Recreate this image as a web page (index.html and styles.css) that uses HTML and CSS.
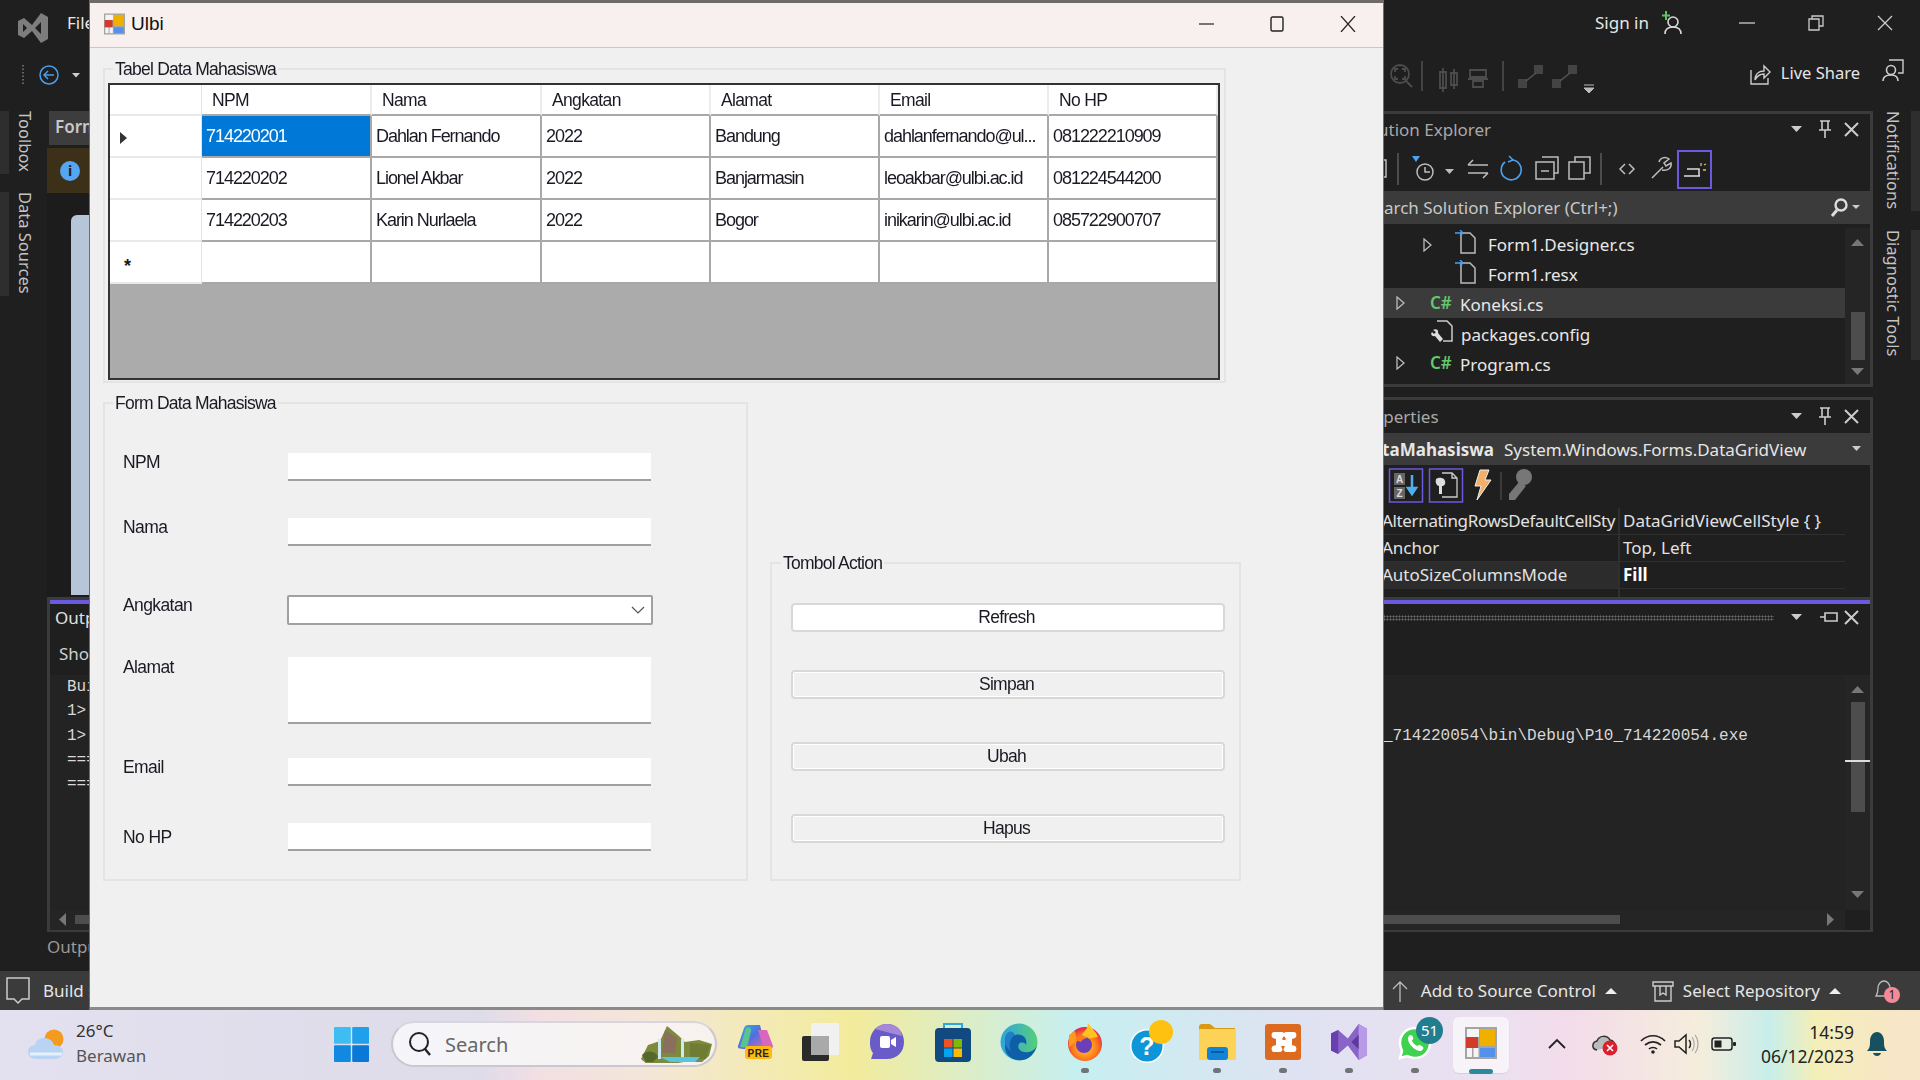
FILE: index.html
```html
<!DOCTYPE html>
<html lang="id">
<head>
<meta charset="utf-8">
<title>Ulbi</title>
<link rel="stylesheet" href="styles.css">
</head>
<body>
<div class="desktop">
  <div class="ide">
    <div class="ide-top">
      <div class="menu-row">
        <svg class="vs-logo" width="30" height="30" viewBox="0 0 30 30"><path fill="#7d7d7d" fill-rule="evenodd" d="M0 8 6 5l8 7L23 0l7 4v22l-7 4-9-12-8 7-6-3ZM23 9l-6 6 6 6ZM5 11l4 4-4 4Z"/></svg>
        <span class="menu-item">File</span>
        <span class="spacer"></span>
        <span class="sign-in">Sign in</span>
        <svg class="avatar" width="22" height="24" viewBox="0 0 22 24"><path d="M6 0v9M2 4.500h8" stroke="#5fc15f" stroke-width="2"/><circle cx="13" cy="11" r="5" fill="none" stroke="#d8d8d8" stroke-width="1.600"/><path d="M5 23c0-5 3-7 8-7s8 2 8 7" fill="none" stroke="#d8d8d8" stroke-width="1.600"/></svg>
        <svg class="cap cap-min" width="16" height="16" viewBox="0 0 16 16"><path d="M0 8h16" stroke="#ccc" stroke-width="1.300"/></svg>
        <svg class="cap cap-res" width="16" height="16" viewBox="0 0 16 16"><path d="M1 4h10v11H1Z M4 4V1h11v10h-4" fill="none" stroke="#ccc" stroke-width="1.300"/></svg>
        <svg class="cap cap-close" width="16" height="16" viewBox="0 0 16 16"><path d="M1 1l14 14M15 1 1 15" stroke="#ccc" stroke-width="1.300"/></svg>
      </div>
      <div class="tool-row">
        <svg class="back" width="62" height="24" viewBox="0 0 62 24"><path d="M4 2v20" stroke="#666" stroke-width="2" stroke-dasharray="1.500 2"/><circle cx="30" cy="12" r="9" fill="none" stroke="#4a9fea" stroke-width="1.500"/><path d="M35 12h-10M29 8l-4 4 4 4" fill="none" stroke="#4a9fea" stroke-width="1.500"/><path d="M53 10h8l-4 4.500Z" fill="#ccc"/></svg>
        <span class="spacer"></span>
        <svg class="tool-icons" width="222" height="44" viewBox="0 0 222 44">
          <g fill="none" stroke="#4c4c4c" stroke-width="1.800"><circle cx="10" cy="17" r="9"/><path d="M16 24l6 6M5 15v-3h3M15 15v-3h-3M5 19v3h3M15 19v3h-3"/><path d="M32 4v30" stroke="#484848"/><path d="M50 15h6v16h-6ZM61 16h6v12h-6ZM53 11v24M64 12v20"/><path d="M80 13h16v7H80ZM83 24h10v6H83ZM78 22h20"/><path d="M113 4v30" stroke="#484848"/></g>
          <g fill="#444"><rect x="128" y="22" width="9" height="9"/><rect x="144" y="8" width="9" height="9"/><rect x="162" y="22" width="9" height="9"/><rect x="178" y="8" width="9" height="9"/></g>
          <path d="M136 24 146 16M170 24l10-8" stroke="#555" stroke-width="1.500"/>
          <path d="M194 28h10M194 31h10l-5 5Z" fill="#bbb" stroke="#bbb"/>
        </svg>
        <svg class="share" width="22" height="22" viewBox="0 0 22 22"><path d="M2 7v14h17v-6M6 17c0-6 4-9 9-9V3l6 6-6 6v-4c-4 0-7 2-9 6Z" fill="none" stroke="#ccc" stroke-width="1.400"/></svg>
        <span class="live-share">Live Share</span>
        <svg class="feedback" width="22" height="24" viewBox="0 0 22 24"><path d="M7 1h14v13h-5" fill="none" stroke="#ccc" stroke-width="1.400"/><circle cx="9" cy="11" r="4.500" fill="#1f1f1f" stroke="#ccc" stroke-width="1.600"/><path d="M1 22c0-4 3-6 8-6s7 2 7 6" fill="none" stroke="#ccc" stroke-width="1.600"/></svg>
      </div>
    </div>
    <div class="ide-main">
      <div class="rail rail-left">
        <span class="rail-tab rail-tab-toolbox">Toolbox</span>
        <span class="rail-tab">Data Sources</span>
      </div>
      <div class="work">
        <div class="work-upper">
          <div class="designer">
            <div class="doc-tab">Form1</div>
            <div class="infobar"><span class="info-dot">i</span></div>
            <div class="canvas"><div class="design-form"></div></div>
          </div>
          <div class="side">
            <div class="panel panel-se">
              <div class="panel-title title-se"><span class="title-text">Solution Explorer</span>
                <svg class="panel-ctl" width="72" height="20" viewBox="0 0 72 20"><use href="#ctl-set"/></svg></div>
              <svg class="se-tools" width="336" height="46" viewBox="0 0 336 46">
                <g fill="none" stroke="#bdbdbd" stroke-width="1.500">
                  <rect x="-4" y="15" width="7" height="17"/>
                  <path d="M15 8v32" stroke="#4c4c4c" stroke-width="2"/>
                  <circle cx="42" cy="27" r="8"/><path d="M42 22v5h5"/>
                  <path d="M85 20h20M90 15l-5 5M85 28h20M100 33l5-5"/>
                  <path d="M159 12h16v16h-4M153 17h18v17h-18Z M158 26h8"/>
                  <rect x="192" y="12" width="15" height="16"/><rect x="186" y="17" width="15" height="17" fill="#1f1f1f"/>
                  <path d="M218 8v32" stroke="#4c4c4c" stroke-width="2"/>
                  <path d="M242 19l-5 5 5 5M246 19l5 5-5 5"/>
                  <path d="M269 33l11-11M276 17c1-4 6-6 10-3l-5 4 2 3 5-3c1 5-3 8-9 7"/>
                </g>
                <path d="M29 11h8l-4 6Z" fill="#4aa3f0"/>
                <path d="M62 24h9l-4.500 5Z" fill="#bdbdbd"/>
                <path d="M122 17a10 10 0 1 0 8-2" fill="none" stroke="#4aa3f0" stroke-width="1.600"/><path d="M126 11l4 4-5 2" fill="none" stroke="#4aa3f0" stroke-width="1.500"/>
                <rect x="295" y="6" width="33" height="37" fill="none" stroke="#6a5ae0" stroke-width="2"/>
                <path d="M301 31h16M304 24h12v7" fill="none" stroke="#ddd" stroke-width="1.500"/><path d="M318 18v3M320 25h3M321 20l2-1" stroke="#e0c060" stroke-width="1.300"/>
              </svg>
              <div class="search-box"><span class="search-text">Search Solution Explorer (Ctrl+;)</span>
                <svg class="search-ico" width="36" height="24" viewBox="0 0 36 24"><circle cx="12" cy="9" r="5.500" fill="none" stroke="#ddd" stroke-width="2.400"/><path d="M8 14l-5 6" stroke="#ddd" stroke-width="3"/><path d="M23 9h8l-4 4Z" fill="#ccc"/></svg>
              </div>
              <div class="tree">
                <div class="tree-rows">
                  <div class="tree-row lvl-3"><svg class="file-i" width="22" height="24" viewBox="0 0 22 24"><use href="#link-file"/></svg><svg class="expander exp-abs" width="10" height="14" viewBox="0 0 10 14"><path d="M1 1l7 6-7 6Z" fill="none" stroke="#bbb" stroke-width="1.300"/></svg><span>Form1.Designer.cs</span></div>
                  <div class="tree-row lvl-3"><svg class="file-i" width="22" height="24" viewBox="0 0 22 24"><use href="#link-file"/></svg><span>Form1.resx</span></div>
                  <div class="tree-row lvl-2 tree-row-sel"><svg class="expander" width="10" height="14" viewBox="0 0 10 14"><path d="M1 1l7 6-7 6Z" fill="none" stroke="#bbb" stroke-width="1.300"/></svg><span class="cs">C#</span><span>Koneksi.cs</span></div>
                  <div class="tree-row lvl-2"><span class="no-exp"></span><svg class="cfg-i" width="24" height="24" viewBox="0 0 24 24"><path d="M7 1h10l5 5v15H13" fill="none" stroke="#ccc" stroke-width="1.500"/><path d="M3 10c3-2 6 0 5 3l5 6-3 3-5-6c-3 1-5-2-3-4l2 2 2-2Z" fill="#ddd"/></svg><span>packages.config</span></div>
                  <div class="tree-row lvl-2"><svg class="expander" width="10" height="14" viewBox="0 0 10 14"><path d="M1 1l7 6-7 6Z" fill="none" stroke="#bbb" stroke-width="1.300"/></svg><span class="cs">C#</span><span>Program.cs</span></div>
                </div>
                <svg class="vscroll" width="25" height="156" viewBox="0 0 25 156"><rect width="25" height="156" fill="#252525"/><path d="M6 18h13l-6.500-7Z" fill="#777"/><rect x="6" y="84" width="14" height="48" fill="#4d4d4d"/><path d="M6 140h13l-6.500 7Z" fill="#777"/></svg>
              </div>
            </div>
            <div class="panel panel-props">
              <div class="panel-title title-props"><span class="title-text">Properties</span>
                <svg class="panel-ctl" width="72" height="20" viewBox="0 0 72 20"><use href="#ctl-set"/></svg></div>
              <div class="obj-select"><b>dgvDataMahasiswa</b><span class="obj-type">System.Windows.Forms.DataGridView</span>
                <svg class="obj-caret" width="10" height="8" viewBox="0 0 10 8"><path d="M0 1h9L4.500 6Z" fill="#ccc"/></svg></div>
              <svg class="prop-tools" width="160" height="40" viewBox="0 0 160 40">
                <path d="M1 6v22" stroke="#888" stroke-width="2" stroke-dasharray="2 2"/>
                <rect x="7.500" y="3" width="33" height="33" fill="none" stroke="#6a5ae0" stroke-width="1.500"/>
                <rect x="47.500" y="3" width="33" height="33" fill="none" stroke="#6a5ae0" stroke-width="1.500"/>
                <rect x="12" y="7" width="11" height="12" fill="#666"/><rect x="12" y="21" width="11" height="12" fill="#666"/>
                <text x="17.500" y="17" class="az">A</text><text x="17.500" y="31" class="az">Z</text>
                <path d="M30 9v15M26 22l4 6 4-6Z" stroke="#4fb0ee" stroke-width="2.500" fill="#4fb0ee"/>
                <path d="M60 7h10l5 5v19H60M70 7v5h5" fill="none" stroke="#ccc" stroke-width="1.300"/><path d="M54 13c3-2 8-2 9 2 1 3-1 5-3 5v8h-3v-8c-2 0-4-3-3-7Z" fill="#ddd"/>
                <path d="M98 4h9l-4 10h6L95 34l4-14h-6Z" fill="#f3b06a" stroke="#eee" stroke-width="1"/>
                <path d="M119 6v28" stroke="#444" stroke-width="1.500"/>
                <circle cx="142" cy="11" r="8" fill="#777"/><path d="M137 16 127 28v6h6l11-14Z" fill="#777"/>
              </svg>
              <div class="prop-grid">
                <div class="prop-row"><span class="prop-name prop-name-fit">AlternatingRowsDefaultCellSty</span><span class="prop-val">DataGridViewCellStyle { }</span></div>
                <div class="prop-row"><span class="prop-name">Anchor</span><span class="prop-val">Top, Left</span></div>
                <div class="prop-row prop-row-sel"><span class="prop-name">AutoSizeColumnsMode</span><span class="prop-val prop-bold">Fill</span></div>
                <div class="prop-row prop-row-cut"><span class="prop-name"></span><span class="prop-val"></span></div>
              </div>
            </div>
          </div>
        </div>
        <div class="output">
          <div class="out-title"><span class="out-name">Output</span><span class="grip"></span>
            <svg class="panel-ctl" width="72" height="20" viewBox="0 0 72 20"><path d="M2 6h11L7.500 12Z" fill="#ccc"/><path d="M31 9h5M36 5h12v8H36ZM36 5v8" fill="none" stroke="#ccc" stroke-width="1.600"/><path d="M56 3l13 13M69 3 56 16" stroke="#ccc" stroke-width="2"/></svg></div>
          <div class="out-tools">Show</div>
          <div class="out-body">
            <div class="out-text">
              <div>Build</div>
              <div>1></div>
              <div><span class="out-prefix">1></span>_714220054\bin\Debug\P10_714220054.exe</div>
              <div>===</div>
              <div>===</div>
            </div>
            <svg class="vscroll out-vs" width="25" height="235" viewBox="0 0 25 235"><path d="M6 18h13l-6.500-7Z" fill="#777"/><rect x="6" y="27" width="14" height="110" fill="#4d4d4d"/><rect y="85" width="25" height="2" fill="#ddd"/><path d="M6 216h13l-6.500 7Z" fill="#777"/></svg>
          </div>
          <svg class="hscroll" width="1795" height="20" viewBox="0 0 1795 20"><rect width="1795" height="20" fill="#252525"/><path d="M16 3v13l-7-6.500Z" fill="#777"/><rect x="25" y="5" width="1545" height="9" fill="#4d4d4d"/><path d="M1777 3v13l7-6.500Z" fill="#777"/></svg>
        </div>
        <div class="out-tabs">Output</div>
      </div>
      <div class="rail rail-right">
        <span class="rail-tab rail-tab-notif">Notifications</span>
        <span class="rail-tab rail-tab-diag">Diagnostic Tools</span>
      </div>
    </div>
    <div class="status">
      <svg class="status-chat" width="26" height="30" viewBox="0 0 26 30"><path d="M2 2h22v21h-7l-4 4-4-4H2Z" fill="none" stroke="#ccc" stroke-width="1.500"/></svg>
      <span class="status-text">Build succeeded</span>
      <span class="spacer"></span>
      <svg class="status-up" width="18" height="22" viewBox="0 0 18 22"><path d="M9 22V2M2 9l7-7 7 7" fill="none" stroke="#bbb" stroke-width="1.300"/></svg>
      <span class="status-text status-add">Add to Source Control</span>
      <svg class="status-caret" width="12" height="8" viewBox="0 0 12 8"><path d="M0 7h12L6 1Z" fill="#eee"/></svg>
      <svg class="status-repo" width="22" height="22" viewBox="0 0 22 22"><path d="M1 2h20v4H1ZM3 6v15h16V6M8 6v9l3-2 3 2V6" fill="none" stroke="#ccc" stroke-width="1.400"/></svg>
      <span class="status-text status-sel">Select Repository</span>
      <svg class="status-caret" width="12" height="8" viewBox="0 0 12 8"><path d="M0 7h12L6 1Z" fill="#eee"/></svg>
      <span class="status-bell">
        <svg width="22" height="22" viewBox="0 0 22 22"><path d="M3 17c2-3 2-5 2-8 0-4 3-7 6-7s6 3 6 7c0 3 0 5 2 8Z" fill="none" stroke="#bbb" stroke-width="1.300"/></svg>
        <span class="bell-count">1</span>
      </span>
    </div>
  </div>

  <div class="form-window">
    <div class="form-title">
      <svg class="form-icon" width="21" height="22" viewBox="0 0 32 32"><use href="#app-grid"/></svg>
      <span class="form-name">Ulbi</span>
      <span class="spacer"></span>
      <svg class="fcap fcap-min" width="16" height="16" viewBox="0 0 16 16"><path d="M0 8h15" stroke="#222" stroke-width="1.200"/></svg>
      <svg class="fcap fcap-max" width="16" height="16" viewBox="0 0 16 16"><rect x="2" y="1" width="12" height="14" rx="1.500" fill="none" stroke="#222" stroke-width="1.400"/></svg>
      <svg class="fcap fcap-close" width="16" height="16" viewBox="0 0 16 16"><path d="M1 0l14 16M15 0 1 16" stroke="#222" stroke-width="1.200"/></svg>
    </div>
    <div class="form-body">
      <div class="group group-table">
        <div class="group-label">Tabel Data Mahasiswa</div>
        <div class="dgv">
          <div class="dgv-row dgv-head">
            <div class="rh"></div><div class="hc">NPM</div><div class="hc">Nama</div><div class="hc">Angkatan</div><div class="hc">Alamat</div><div class="hc">Email</div><div class="hc">No HP</div>
          </div>
          <div class="dgv-row">
            <div class="rh"><span class="row-arrow"></span></div><div class="dc dc-sel">714220201</div><div class="dc">Dahlan Fernando</div><div class="dc">2022</div><div class="dc">Bandung</div><div class="dc">dahlanfernando@ul...</div><div class="dc">081222210909</div>
          </div>
          <div class="dgv-row">
            <div class="rh"></div><div class="dc">714220202</div><div class="dc">Lionel Akbar</div><div class="dc">2022</div><div class="dc">Banjarmasin</div><div class="dc">leoakbar@ulbi.ac.id</div><div class="dc">081224544200</div>
          </div>
          <div class="dgv-row">
            <div class="rh"></div><div class="dc">714220203</div><div class="dc">Karin Nurlaela</div><div class="dc">2022</div><div class="dc">Bogor</div><div class="dc">inikarin@ulbi.ac.id</div><div class="dc">085722900707</div>
          </div>
          <div class="dgv-row">
            <div class="rh rh-new">*</div><div class="dc"></div><div class="dc"></div><div class="dc"></div><div class="dc"></div><div class="dc"></div><div class="dc"></div>
          </div>
        </div>
      </div>
      <div class="form-lower">
        <div class="group group-form">
          <div class="group-label">Form Data Mahasiswa</div>
          <div class="fields">
            <span class="f-label">NPM</span><span class="f-input"></span>
            <span class="f-label">Nama</span><span class="f-input"></span>
            <span class="f-label f-label-mid">Angkatan</span>
            <span class="f-combo"><svg width="14" height="9" viewBox="0 0 14 9"><path d="M1 1l6 6 6-6" fill="none" stroke="#555" stroke-width="1.200"/></svg></span>
            <span class="f-label f-label-mid">Alamat</span><span class="f-input f-area"></span>
            <span class="f-label">Email</span><span class="f-input"></span>
            <span class="f-label f-label-low">No HP</span><span class="f-input"></span>
          </div>
        </div>
        <div class="group group-action">
          <div class="group-label group-label-action">Tombol Action</div>
          <div class="actions">
            <span class="btn btn-first">Refresh</span>
            <span class="btn">Simpan</span>
            <span class="btn">Ubah</span>
            <span class="btn">Hapus</span>
          </div>
        </div>
      </div>
    </div>
  </div>
</div>

<div class="taskbar">
  <svg class="weather" width="38" height="32" viewBox="0 0 38 32"><circle cx="26" cy="11" r="9.500" fill="#f39a1f"/><path d="M8 31c-5 0-8-3-8-7s3-7 7-7c1-5 5-7 9-7 5 0 9 3 10 7 5 0 9 3 9 7s-3 7-8 7Z" fill="#b9d4f3"/><path d="M2 26h32" stroke="#e6f0fb" stroke-width="3"/></svg>
  <div class="weather-text"><span>26°C</span><span class="weather-sub">Berawan</span></div>
  <svg class="win" width="35" height="35" viewBox="0 0 35 35"><rect width="16.800" height="16.800" rx="1" fill="#3dbdf2"/><rect x="18.200" width="16.800" height="16.800" rx="1" fill="#1fa0ea"/><rect y="18.200" width="16.800" height="16.800" rx="1" fill="#0f8ae0"/><rect x="18.200" y="18.200" width="16.800" height="16.800" rx="1" fill="#0a78d6"/></svg>
  <div class="searchbar">
    <svg width="24" height="26" viewBox="0 0 24 26"><circle cx="11" cy="11" r="9" fill="none" stroke="#222" stroke-width="2"/><path d="M17 18l5 6" stroke="#222" stroke-width="2.400"/></svg>
    <span class="search-label">Search</span>
    <span class="spacer"></span>
    <svg width="74" height="38" viewBox="0 0 74 38"><path d="M1 34 8 20 20 16 27 1l12 10 6 6 14-2 13 4-3 12-7 6H44l-18 3H8Z" fill="#7d8a3c"/><path d="M25 5l12 8-2 15H22Z" fill="#8a6f5c"/><path d="M50 18l20 2-4 14H50Z" fill="#6f7d32"/><path d="M18 14h3v20h-3ZM41 14h3v22h-3Z" fill="#cfe9f2"/><path d="M20 32h40l-5 5H30Z" fill="#58c4e0"/><path d="M2 30c5-6 14-4 16 2l-5 5H6Z" fill="#55682c"/></svg>
  </div>
  <div class="tslot"><svg width="38" height="36" viewBox="0 0 38 36"><defs><linearGradient id="cp" x1="0" y1="0" x2="1" y2="1"><stop offset="0" stop-color="#2fb7e8"/><stop offset=".5" stop-color="#4f6fe0"/><stop offset="1" stop-color="#e06ab0"/></linearGradient></defs><path d="M2 22 8 4c1-2 2-3 4-3h12l6 24H8c-4 0-7-1-6-3Z" fill="url(#cp)"/><path d="M10 4l-6 19c5 1 7 0 8-3l3-13c1-3-3-5-5-3Z" fill="#5bc38e"/><path d="M22 6l9 0 6 16c0 3-3 3-5 3h-4Z" fill="#d768bd"/><rect x="9" y="22" width="27" height="13" rx="3" fill="#fdbb12"/><text x="22.500" y="32.500" class="pre">PRE</text></svg></div>
  <div class="tslot"><svg width="38" height="38" viewBox="0 0 38 38"><rect x="0" y="13" width="27" height="25" rx="2" fill="#2a2a2a"/><rect x="9" y="0" width="28" height="32" rx="1" fill="#f1f1f1"/><rect x="9" y="13" width="18" height="19" fill="#a9a9a9"/></svg></div>
  <div class="tslot"><svg width="36" height="38" viewBox="0 0 36 38"><path d="M18 1c10 0 17 8 17 18s-7 17-17 17H2l2-6C1 26 1 22 1 19 1 9 8 1 18 1Z" fill="#6a5cc8"/><path d="M18 1c10 0 14 6 15 12L6 6c3-3 7-5 12-5Z" fill="#a688d8"/><rect x="11" y="13" width="10" height="12" rx="2" fill="#fff"/><path d="M22 17l5-3v10l-5-3Z" fill="#fff"/></svg></div>
  <div class="tslot"><svg width="36" height="40" viewBox="0 0 36 40"><path d="M9 7V2h18v5" fill="none" stroke="#2ca7e0" stroke-width="2"/><rect y="6" width="36" height="34" rx="4" fill="#114a80"/><rect x="9" y="17" width="8.500" height="8.500" fill="#f25022"/><rect x="18.500" y="17" width="8.500" height="8.500" fill="#7fba00"/><rect x="9" y="26.500" width="8.500" height="8.500" fill="#00a4ef"/><rect x="18.500" y="26.500" width="8.500" height="8.500" fill="#ffb900"/></svg></div>
  <div class="tslot"><svg width="38" height="38" viewBox="0 0 38 38"><defs><linearGradient id="ed" x1="0" y1="0" x2="1" y2="0"><stop offset="0" stop-color="#2fa4e0"/><stop offset="1" stop-color="#56cf7a"/></linearGradient></defs><circle cx="19" cy="19" r="18.500" fill="url(#ed)"/><path d="M37 22c-2 6-8 8-13 7-5-1-7-5-5-8 1-2 6-2 7 1 2-7-4-12-11-10C7 14 3 22 6 29c4 9 18 11 25 4 3-3 5-7 6-11Z" fill="#0f5fa8"/><path d="M15 12c-5 3-7 10-4 16-5-3-8-10-5-16 2-4 6-5 9 0Z" fill="#1f7ec4"/></svg></div>
  <div class="tslot tslot-dot"><svg width="36" height="38" viewBox="0 0 36 38"><defs><radialGradient id="ff" cx=".5" cy=".6" r=".6"><stop offset="0" stop-color="#ffd23a"/><stop offset=".6" stop-color="#ff7a18"/><stop offset="1" stop-color="#e0224f"/></radialGradient></defs><circle cx="18" cy="21" r="17" fill="url(#ff)"/><path d="M21 0c3 5 8 8 10 14l-12 2-4-5c3-3 6-6 6-11Z" fill="#ffc31f"/><path d="M2 12 8 8l2 10-8 6Z" fill="#ff9a1f"/><circle cx="17" cy="22" r="8" fill="#6b3fb8"/><path d="M8 17c3-4 9-5 14-2-5 0-7 2-8 4Z" fill="#ff7a18"/></svg></div>
  <div class="tslot"><svg width="44" height="44" viewBox="0 0 44 44"><circle cx="18" cy="26" r="17" fill="#fff"/><circle cx="18" cy="26" r="15.500" fill="#0f96d8"/><text x="18" y="35" class="qm">?</text><circle cx="32" cy="12" r="12" fill="#fec10f"/></svg></div>
  <div class="tslot tslot-dot"><svg width="37" height="36" viewBox="0 0 37 36"><path d="M0 3c0-2 1-3 3-3h8l5 4h20v6H0Z" fill="#d99a11"/><rect y="5" width="37" height="31" rx="1" fill="#fcd257"/><rect x="8" y="23" width="21" height="13" rx="3" fill="#1184d8"/><path d="M12 28h13" stroke="#0b5a9a" stroke-width="2"/></svg></div>
  <div class="tslot tslot-dot"><svg width="36" height="36" viewBox="0 0 36 36"><rect width="36" height="36" rx="3" fill="#dc6a1f"/><path d="M9 8h7c3 0 4 2 3 4l-2 3 1 1 1 0 1 0 1-1-2-3c-1-2 0-4 3-4h7c3 0 3 5 1 6l-3 1v6l3 1c2 1 2 6-1 6h-7c-3 0-4-2-3-4l1-2h-4l1 2c1 2 0 4-3 4H9c-3 0-3-5-1-6l3-1v-6l-3-1c-2-1-2-6 1-6Z" fill="#fff"/></svg></div>
  <div class="tslot tslot-dot"><svg width="36" height="36" viewBox="0 0 30 30"><path fill="#8a63c8" d="M0 8 6 5l8 7L23 0l7 4v22l-7 4-9-12-8 7-6-3Z"/><path fill="#b79be6" d="M23 0l7 4v22l-7 4Z"/><path fill="#6a3fae" d="M0 8l6-3v20l-6-3Z"/><path fill="#5b3a9e" d="M23 9l-6 6 6 6Z"/></svg></div>
  <div class="tslot tslot-dot tslot-wa">
    <svg width="34" height="36" viewBox="0 0 34 36"><path d="M17 2c9 0 15 7 15 15s-6 15-15 15c-3 0-5-1-8-2l-7 2 2-7C3 22 2 20 2 17 2 9 8 2 17 2Z" fill="#3ed24f" stroke="#fff" stroke-width="2.500"/><path d="M11 10c1-2 3-1 4 1s-1 3-1 4c1 2 3 4 5 5 1 0 2-2 3-1l3 2c1 1 0 3-2 4-5 1-13-7-13-12 0-1 0-2 1-3Z" fill="#fff"/></svg>
    <span class="wa-badge">51</span>
  </div>
  <div class="tslot tslot-active"><svg width="32" height="32" viewBox="0 0 32 32"><use href="#app-grid"/></svg></div>
  <svg class="tray tray-chev" width="20" height="12" viewBox="0 0 20 12"><path d="M2 10l8-8 8 8" fill="none" stroke="#222" stroke-width="1.800"/></svg>
  <svg class="tray tray-cloud" width="26" height="24" viewBox="0 0 26 24"><path d="M5 18c-6-1-5-8 0-9 2-6 10-6 13-1 4 0 5 4 4 6" fill="#bbb" stroke="#333" stroke-width="1.500"/><circle cx="18" cy="16" r="7.500" fill="#d9202f"/><path d="M15 13l6 6M21 13l-6 6" stroke="#fff" stroke-width="1.600"/></svg>
  <svg class="tray tray-wifi" width="26" height="20" viewBox="0 0 26 20"><path d="M1 7c7-7 17-7 24 0M5 11c5-4 11-4 16 0M9 15c2-2 6-2 8 0" fill="none" stroke="#222" stroke-width="1.700"/><circle cx="13" cy="18" r="1.800" fill="#222"/></svg>
  <svg class="tray tray-vol" width="26" height="22" viewBox="0 0 26 22"><path d="M2 8h4l7-6v18l-7-6H2Z" fill="none" stroke="#222" stroke-width="1.500"/><path d="M16 7c2 2 2 6 0 8" fill="none" stroke="#222" stroke-width="1.500"/><path d="M19 4c3 4 3 10 0 14M22 2c4 5 4 13 0 18" fill="none" stroke="#aaa" stroke-width="1.200"/></svg>
  <svg class="tray tray-bat" width="25" height="14" viewBox="0 0 25 14"><rect x="1" y="1" width="20" height="12" rx="2.500" fill="none" stroke="#222" stroke-width="1.500"/><rect x="3.500" y="3.500" width="7" height="7" fill="#222"/><rect x="22" y="5" width="3" height="4" rx="1" fill="#222"/></svg>
  <div class="clock"><span>14:59</span><span>06/12/2023</span></div>
  <svg class="tray-bell" width="22" height="26" viewBox="0 0 22 26"><path d="M1 20c3-3 3-6 3-10 0-5 3-9 7-9s7 4 7 9c0 4 0 7 3 10Z" fill="#17505f"/><path d="M7 22h8c-1 4-7 4-8 0Z" fill="#17505f"/></svg>
</div>

<svg class="defs" width="0" height="0">
  <defs>
    <g id="ctl-set"><path d="M2 6h11L7.500 12Z" fill="#ccc"/><path d="M31 1h10M33 1v9h6V1M30 10h12M36 10v8" fill="none" stroke="#ccc" stroke-width="1.600"/><path d="M56 3l13 13M69 3 56 16" stroke="#ccc" stroke-width="2"/></g>
    <g id="link-file"><path d="M6 3h9l5 5v15H6Z" fill="none" stroke="#bbb" stroke-width="1.500"/><path d="M0 3h8M5 0l3 3-3 3" fill="none" stroke="#4aa3f0" stroke-width="1.400"/></g>
    <g id="app-grid"><rect width="32" height="32" fill="#a4a4a4"/><rect x="2" y="2" width="12" height="8" fill="#f4f4f4"/><rect x="2" y="21" width="5" height="9" fill="#f4f4f4"/><rect x="8.500" y="21" width="5" height="9" fill="#f4f4f4"/><rect x="15" y="2" width="15" height="17" fill="#f0b000"/><rect x="15" y="21" width="15" height="9" fill="#5590ea"/><rect x="1" y="10" width="12" height="11" fill="#d23a2c"/></g>
  </defs>
</svg>
</body>
</html>
```
FILE: styles.css
```css
* { box-sizing: border-box; }
html, body { margin: 0; padding: 0; }
body {
  width: 1920px; height: 1080px; overflow: hidden;
  display: flex; flex-direction: column;
  font-family: "Noto Sans", "Liberation Sans", sans-serif;
  background: #1f1f1f;
}
svg { display: block; flex: none; }
.defs { position: absolute; }
.spacer { flex: 1; }
.desktop { position: relative; height: 1010px; flex: none; }

/* ---------- IDE ---------- */
.ide { height: 1010px; display: flex; flex-direction: column; background: #1f1f1f; color: #ddd; font-size: 17px; }
.ide-top { height: 111px; flex: none; }
.menu-row { height: 47px; display: flex; align-items: center; padding: 0 0 2px 18px; }
.vs-logo { margin-top: 10px; }
.menu-item { margin-left: 19px; color: #e6e6e6; }
.sign-in { color: #e6e6e6; margin-right: 11px; }
.avatar { margin-right: 57px; }
.cap-min { margin-right: 53px; }
.cap-res { margin-right: 53px; }
.cap-close { margin-right: 27px; }
.tool-row { height: 64px; display: flex; align-items: flex-start; padding-left: 19px; padding-top: 13px; }
.back { margin-top: 3px; }
.tool-icons { margin-top: -3px; margin-right: 137px; }
.share { margin-right: 10px; margin-top: 3px; }
.live-share { color: #e6e6e6; margin-top: 1px; margin-right: 22px; font-size: 16.500px; }
.feedback { margin-right: 16px; margin-top: -1px; }

.ide-main { flex: 1; display: flex; min-height: 0; }
.rail { flex: none; display: flex; flex-direction: column; }
.rail-left { width: 47px; gap: 18px; align-items: flex-start; }
.rail-right { width: 47px; gap: 19px; }
.rail-tab {
  writing-mode: vertical-rl; color: #c4c4c4; font-size: 16.500px; line-height: 20px; white-space: nowrap;
}
.rail-left .rail-tab { border-left: 9px solid #2e2e2e; padding-left: 6px; height: 104px; }
.rail-left .rail-tab-toolbox { height: 63px; }
.rail-right .rail-tab { border-right: 9px solid #2e2e2e; padding-right: 8px; width: 47px; padding-left: 10px; }
.rail-right .rail-tab-notif { height: 100px; }
.rail-right .rail-tab-diag { height: 130px; }

.work { flex: 1; min-width: 0; display: flex; flex-direction: column; }
.work-upper { height: 486px; display: flex; flex: none; }
.designer { width: 1232px; flex: none; display: flex; flex-direction: column; }
.doc-tab { height: 34px; background: #3d3d3d; color: #c8c8c8; font-weight: 600; margin-left: 2px; padding: 4px 0 0 6px; }
.infobar { height: 45px; margin-top: 3px; background: #3c3018; display: flex; align-items: center; padding-left: 13px; }
.info-dot { width: 20px; height: 20px; border-radius: 50%; background: #55a5f5; color: #1f1f1f; font-size: 14px; line-height: 20px; text-align: center; font-weight: 700; }
.canvas { flex: 1; background: #1c1c1c; padding: 22px 0 0 24px; }
.design-form { height: 380px; background: linear-gradient(90deg, #b6c6d8, #d8dde2 60%, #e8e8e8); border-radius: 6px 0 0 0; }

.side { flex: 1; min-width: 0; display: flex; flex-direction: column; }
.panel { display: flex; flex-direction: column; border: 3px solid #3b3b3b; border-left: 0; background: #1f1f1f; }
.panel-se { height: 276px; }
.panel-props { height: 200px; margin-top: 10px; border-bottom: 0; }
.panel-title { display: flex; align-items: center; flex: none; color: #a8a8a8; }
.panel-ctl { margin-left: auto; margin-right: 9px; flex: none; }
.title-se { height: 31px; padding-left: 75px; }
.title-props { height: 33px; padding-left: 77px; }
.se-tools { margin-left: 104px; height: 46px; flex: none; }
.search-box { height: 33px; flex: none; background: #3b3b3b; display: flex; align-items: center; padding-left: 86px; color: #c8c8c8; margin-bottom: 4px; }
.search-ico { margin-left: auto; margin-right: 5px; }
.tree { flex: 1; display: flex; min-height: 0; }
.tree-rows { flex: 1; min-width: 0; }
.tree-row { height: 30px; display: flex; align-items: center; color: #e8e8e8; position: relative; padding-top: 2px; }
.tree-row-sel { background: #3b3b3b; }
.lvl-2 { padding-left: 117px; }
.lvl-3 { padding-left: 176px; }
.exp-abs { position: absolute; left: 144px; top: 12px; }
.file-i { margin-right: 11px; margin-top: -4px; }
.expander { margin-right: 24px; margin-top: -2px; }
.no-exp { width: 29px; flex: none; }
.cs { color: #67c56e; font-weight: 600; width: 30px; flex: none; margin-top: -3px; font-size: 17px; }
.cfg-i { margin-right: 7px; margin-top: -4px; margin-left: 5px; }

.obj-select { height: 32px; flex: none; background: #3b3b3b; display: flex; align-items: center; padding-left: 8px; color: #e6e6e6; justify-content: flex-start; white-space: nowrap; }
.obj-select b { width: 207px; flex: none; text-align: right; }
.obj-type { margin-left: 10px; }
.obj-caret { margin-left: auto; margin-right: 8px; }
.prop-tools { margin: 1px 0 1px 103px; height: 40px; flex: none; }
.az { font: 700 10px "Liberation Sans", sans-serif; fill: #ddd; text-anchor: middle; }
.prop-grid { flex: 1; min-height: 0; overflow: hidden; padding: 1px 25px 0 0; }
.prop-row { height: 27px; display: flex; border-bottom: 1px solid #2f2f2f; white-space: nowrap; }
.prop-name { width: 341px; flex: none; padding-left: 103px; overflow: hidden; border-right: 2px solid #2f2f2f; line-height: 26px; color: #e2e2e2; }
.prop-name-fit { letter-spacing: -.35px; }
.prop-val { padding-left: 3px; line-height: 26px; color: #e2e2e2; }
.prop-bold { font-weight: 700; color: #fff; }
.prop-row-sel .prop-name { background: #2c2c2c; }
.prop-row-cut { height: 9px; }

.output { height: 335px; flex: none; display: flex; flex-direction: column; border-top: 3px solid #3b3b3b; border-left: 3px solid #3b3b3b; border-right: 3px solid #3b3b3b; border-bottom: 2px solid #3b3b3b; }
.out-title { height: 37px; flex: none; border-top: 4px solid #6a5ae0; display: flex; align-items: center; padding: 0 0 6px 5px; color: #e0e0e0; }
.grip { flex: 1; height: 6px; margin: 0 15px 0 20px; background-image: radial-gradient(#6a6a6a 45%, transparent 50%); background-size: 3px 3px; }
.out-tools { height: 38px; flex: none; padding-left: 9px; line-height: 34px; color: #d0d0d0; }
.out-body { flex: 1; min-height: 0; display: flex; background: #232323; }
.out-text { flex: 1; min-width: 0; padding: 0 0 0 17px; font-family: "Liberation Mono", monospace; font-size: 16px; line-height: 24.300px; white-space: nowrap; overflow: hidden; color: #d8d8d8; }
.out-prefix { display: inline-block; width: 1316px; overflow: hidden; vertical-align: bottom; }
.out-vs { background: #252525; }
.hscroll { flex: none; width: 1795px; }
.out-tabs { flex: 1; color: #9a9a9a; line-height: 30px; background: #1f1f1f; }

.status { height: 39px; flex: none; background: #3b3b3b; display: flex; align-items: center; padding-left: 5px; color: #e6e6e6; }
.status-chat { margin-right: 12px; }
.status-up { margin-right: 12px; }
.status-caret { margin-left: 9px; }
.status-repo { margin-left: 35px; margin-right: 9px; }
.status-bell { position: relative; margin: 0 23px 0 32px; width: 24px; height: 24px; }
.bell-count { position: absolute; left: 11px; top: 8px; width: 16px; height: 16px; border-radius: 50%; background: #f58a94; color: #222; font-size: 12px; line-height: 16px; text-align: center; }

/* ---------- Form window ---------- */
.form-window {
  position: absolute; left: 90px; top: 0; width: 1293px; height: 1010px;
  background: #f0f0f0; border-top: 3px solid #6e6a68; border-bottom: 3px solid #8a8a8a;
  display: flex; flex-direction: column;
  font-family: "Liberation Sans", sans-serif; color: #1a1a24;
  box-shadow: 1px 0 0 #6e6e6e, -1px 0 0 #6e6e6e;
}
.form-title { height: 45px; flex: none; background: #f8f0ee; border-bottom: 1px solid #c8c8c8; display: flex; align-items: center; padding: 0 0 2px 14px; font-size: 19px; }
.form-icon { margin-right: 6px; }
.form-name { color: #111; }
.fcap-min { margin-right: 54px; }
.fcap-max { margin-right: 55px; }
.fcap-close { margin-right: 27px; }
.form-body { flex: 1; min-height: 0; padding: 20px 0 0 13px; filter: blur(.35px); }
.group { border: 2px solid #e4e4e4; position: relative; }
.group-label { width: fit-content; height: 19px; margin: -11px 0 0 8px; padding: 0 2px; background: #f0f0f0; font-size: 17.500px; line-height: 20px; letter-spacing: -.75px; }
.group-label-action { margin-left: 9px; }
.group-table { width: 1123px; height: 315px; }
.dgv { margin: 5px 0 0 3px; width: 1112px; height: 297px; border: 2px solid #333; background: #ababab; }
.dgv-row { display: grid; grid-template-columns: 92px 170px 170px 169px 169px 169px 169px; height: 42px; }
.dgv-head { height: 31px; }
.rh { background: #fff; border-right: 1px solid #e4e4e4; border-bottom: 2px solid #e9e9e9; position: relative; }
.row-arrow { position: absolute; left: 10px; top: 16px; border-left: 7px solid #333; border-top: 6.500px solid transparent; border-bottom: 6.500px solid transparent; }
.rh-new { font-size: 18px; font-weight: 700; padding: 14px 0 0 14px; line-height: 20px; }
.hc { background: #fff; border-right: 2px solid #ececec; border-bottom: 2px solid #a8a8a8; padding-left: 10px; font-size: 17.500px; line-height: 31px; letter-spacing: -.65px; overflow: hidden; }
.dc { background: #fff; border-right: 2px solid #a8a8a8; border-bottom: 2px solid #a8a8a8; padding-left: 4px; font-size: 18px; line-height: 41px; letter-spacing: -1.050px; white-space: nowrap; overflow: hidden; }
.dc-sel { background: #0078d7; color: #fff; }
.form-lower { display: flex; align-items: flex-end; margin-top: 19px; }
.group-form { width: 645px; height: 479px; }
.group-action { width: 471px; height: 319px; margin-left: 22px; }
.fields { display: grid; grid-template-columns: 165px 363px; grid-template-rows: 65px 77px 62px 101px 65px 57px; padding: 41px 0 0 18px; }
.f-label { font-size: 17.500px; line-height: 20px; margin-top: -1px; letter-spacing: -.6px; }
.f-label-mid { margin-top: 0; }
.f-label-low { margin-top: 4px; }
.f-input { background: #fff; height: 28px; border-bottom: 2px solid #a0a0a0; }
.f-area { height: 67px; }
.f-combo { background: #fff; height: 30px; margin: 0 -2px 0 -1px; border: 2px solid #a0a0a0; display: flex; align-items: center; justify-content: flex-end; padding-right: 6px; border-radius: 2px; }
.actions { display: grid; grid-template-rows: 67px 72px 72px 30px; padding: 31px 0 0 19px; width: 453px; }
.btn { height: 29px; border: 2px solid #d8d8d8; border-radius: 4px; background: #f0f0f0; box-shadow: inset 0 0 0 1px #fff; text-align: center; font-size: 17.500px; line-height: 25px; letter-spacing: -.7px; padding-right: 3px; }
.btn-first { background: #fff; line-height: 24px; }

/* ---------- Taskbar ---------- */
.taskbar {
  height: 70px; flex: none; display: flex; align-items: center; color: #333; position: relative;
  background: linear-gradient(90deg, #e3e0ef 0, #dfdcea 480px, #f2dfe3 540px, #f3e6d9 640px, #f3ebb0 780px, #f2eb9c 854px, #c6eff0 1077px, #dfe2f2 1300px, #ece0f0 1500px, #f3dcea 1570px, #f5eddc 1700px, #c8eeea 1770px, #f3efb8 1815px, #f8e6c8 1900px);
}
.weather { margin-left: 28px; margin-top: -2px; }
.weather-text { display: flex; flex-direction: column; margin-left: 10px; width: 258px; font-size: 17px; line-height: 25px; margin-top: -4px; }
.weather-sub { color: #555; }
.win { margin-top: -1px; }
.searchbar { width: 326px; height: 46px; margin: -2px 5px 0 22px; border-radius: 23px; background: linear-gradient(90deg, #f5f5fa, #f8f2ee); border: 2px solid #c9c7d0; border-top-color: #d8d6dc; display: flex; align-items: center; padding: 0 1px 0 15px; }
.search-label { margin-left: 13px; font-size: 20px; color: #666; }
.tslot { width: 66px; height: 70px; flex: none; display: flex; align-items: center; justify-content: center; position: relative; padding-bottom: 6px; }
.tslot-dot::after { content: ""; position: absolute; left: 29px; top: 58px; width: 8px; height: 5px; border-radius: 3px; background: #707478; }
.tslot-wa { padding-bottom: 2px; }
.pre { font: 700 10px "Liberation Sans", sans-serif; fill: #222; text-anchor: middle; letter-spacing: .5px; }
.qm { font: 700 25px "Liberation Sans", sans-serif; fill: #fff; text-anchor: middle; }
.wa-badge { position: absolute; left: 34px; top: 7px; width: 27px; height: 27px; border-radius: 50%; background: #227e8f; color: #fff; font-size: 15px; line-height: 27px; text-align: center; }
.tslot-active { width: 56px; height: 56px; margin-left: 5px; padding: 0 0 4px; border-radius: 6px; background: rgba(255,255,255,.6); box-shadow: 0 1px 1px rgba(0,0,0,.08); }
.tslot-active::after { content: ""; position: absolute; left: 16px; top: 52px; width: 24px; height: 5px; border-radius: 3px; background: #2a8a9c; }
.tray { margin-top: -2px; }
.tray-chev { margin-left: 38px; }
.tray-cloud { margin-left: 25px; }
.tray-wifi { margin-left: 22px; }
.tray-vol { margin-left: 7px; }
.tray-bat { margin-left: 12px; }
.clock { display: flex; flex-direction: column; align-items: flex-end; width: 118px; font-size: 17.500px; line-height: 24px; color: #222; margin-top: -2px; }
.tray-bell { margin-left: 12px; margin-top: -2px; }
```
